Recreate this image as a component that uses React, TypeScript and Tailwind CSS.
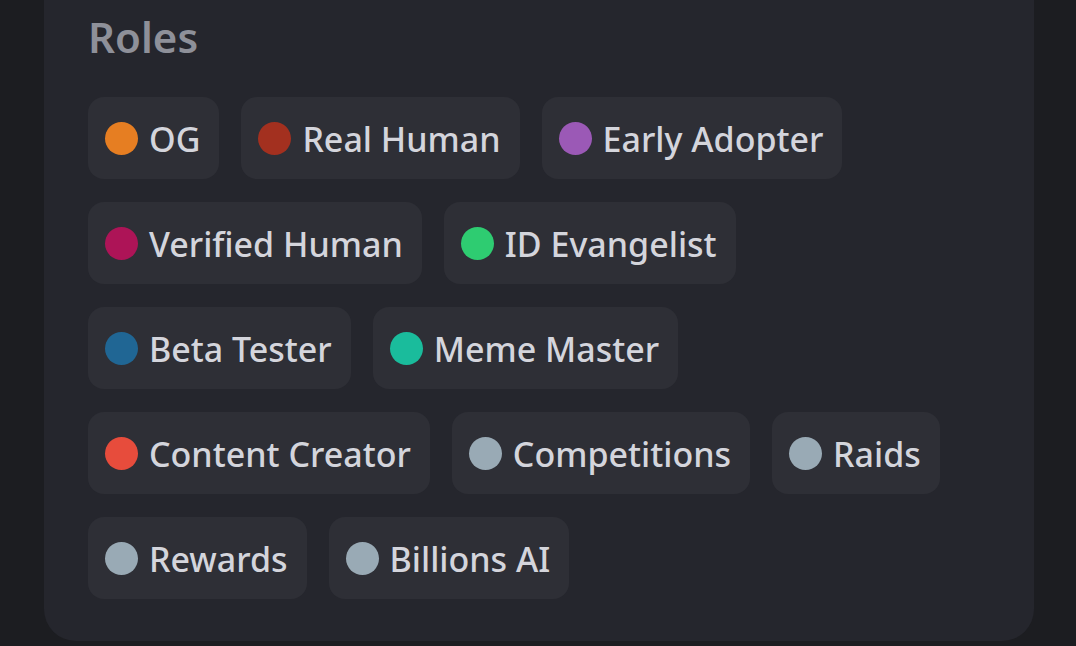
const roles = [
  { name: "OG", color: "bg-[#e67e22]" },
  { name: "Real Human", color: "bg-[#a3301f]" },
  { name: "Early Adopter", color: "bg-[#9b59b6]" },
  { name: "Verified Human", color: "bg-[#ad1457]" },
  { name: "ID Evangelist", color: "bg-[#2ecc71]" },
  { name: "Beta Tester", color: "bg-[#206694]" },
  { name: "Meme Master", color: "bg-[#1abc9c]" },
  { name: "Content Creator", color: "bg-[#e74c3c]" },
  { name: "Competitions", color: "bg-[#99aab5]" },
  { name: "Raids", color: "bg-[#99aab5]" },
  { name: "Rewards", color: "bg-[#99aab5]" },
  { name: "Billions AI", color: "bg-[#99aab5]" },
];

export default function App() {
  return (
    <div
      className="h-[646px] w-[1076px] overflow-hidden bg-[#1c1d21] pl-[44px]"
      style={{ fontFamily: '"Noto Sans", "Open Sans", sans-serif' }}
    >
      <div className="w-[990px] rounded-b-[32px] bg-[#25262d] px-[44px] pb-[42px] pt-[11px]">
        <h2 className="text-[42px] font-semibold leading-[52px] text-[#8e9099]">Roles</h2>
        <div className="mt-[34px] flex flex-wrap gap-x-[22px] gap-y-[23px]">
          {roles.map((r) => (
            <RolePill key={r.name} name={r.name} color={r.color} />
          ))}
        </div>
      </div>
    </div>
  );
}

function RolePill({ name, color }: { name: string; color: string }) {
  return (
    <div className="flex h-[82px] items-center gap-[11px] rounded-[16px] bg-[#2e2f36] pl-[17px] pr-[19px]">
      <span className={`h-[33px] w-[33px] shrink-0 rounded-full ${color}`} />
      <span className="pt-[2px] text-[34px] font-medium leading-none text-[#d4d5dc]">{name}</span>
    </div>
  );
}
